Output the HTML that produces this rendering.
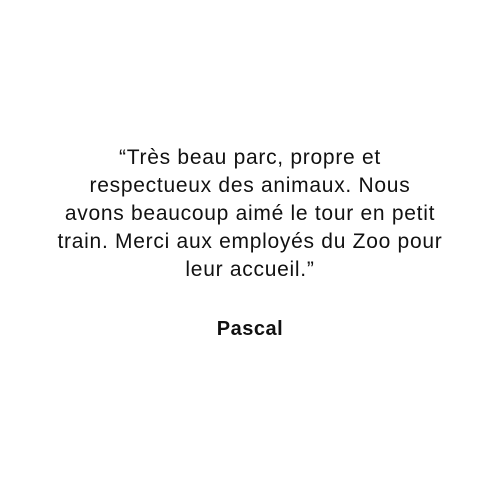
<!DOCTYPE html>
<html><head><meta charset="utf-8"><style>
html,body{margin:0;padding:0;background:#fff;width:500px;height:500px;overflow:hidden}
.q{position:absolute;left:0;top:144px;width:500px;text-align:center;font-family:"Liberation Sans",sans-serif;font-size:21px;line-height:28px;color:#111;letter-spacing:0.72px}
.n{position:absolute;left:0;top:318px;width:500px;text-align:center;font-family:"Liberation Sans",sans-serif;font-size:20px;font-weight:bold;color:#111;letter-spacing:0.5px}
</style></head><body>
<div class="q">“Très beau parc, propre et<br>respectueux des animaux. Nous<br>avons beaucoup aimé le tour en petit<br>train. Merci aux employés du Zoo pour<br>leur accueil.”</div>
<div class="n">Pascal</div>
</body></html>
